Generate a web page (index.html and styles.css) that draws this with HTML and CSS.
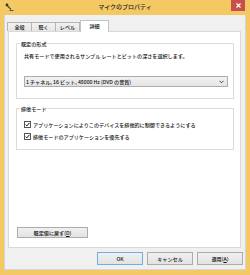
FILE: index.html
```html
<!DOCTYPE html>
<html lang="ja">
<head>
<meta charset="utf-8">
<link rel="stylesheet" href="styles.css">
</head>
<body>
<div class="window">
  <div class="titlebar">
    <div class="tb-left">
      <svg class="app-icon" width="9" height="9" viewBox="0 0 9 9">
        <circle cx="2" cy="2" r="1.4" fill="#333"/>
        <path d="M2.5 2.8 L6 6.3" stroke="#333" stroke-width="1.1" fill="none"/>
        <path d="M4.5 7.5 H8.5" stroke="#555" stroke-width="1" fill="none"/>
      </svg>
    </div>
    <div class="title">マイクのプロパティ</div>
    <div class="tb-right">
      <div class="close">
        <svg width="5" height="5" viewBox="0 0 5 5"><path d="M0.5 0.5 L4.5 4.5 M4.5 0.5 L0.5 4.5" stroke="#fff" stroke-width="1.2"/></svg>
      </div>
    </div>
  </div>
  <div class="client">
    <div class="tabs">
      <div class="tab t1">全般</div>
      <div class="tab t2">聴く</div>
      <div class="tab t3">レベル</div>
      <div class="tab active">詳細</div>
    </div>
    <div class="panel">
      <fieldset class="group g1">
        <legend>既定の形式</legend>
        <p class="desc">共有モードで使用されるサンプル レートとビットの深さを選択します。</p>
        <div class="select">
          <span class="select-text">1 チャネル, 16 ビット, 48000 Hz (DVD の音質)</span>
          <svg class="chev" width="5" height="4" viewBox="0 0 5 4"><path d="M0.5 0.8 L2.5 2.8 L4.5 0.8" stroke="#444" stroke-width="1" fill="none"/></svg>
        </div>
      </fieldset>
      <fieldset class="group g2">
        <legend>排他モード</legend>
        <div class="check">
          <svg class="cb" width="7" height="7" viewBox="0 0 7 7"><rect x="0.5" y="0.5" width="6" height="6" fill="#fff" stroke="#555"/><path d="M1.6 3.6 L2.9 4.9 L5.4 1.9" stroke="#111" stroke-width="1" fill="none"/></svg>
          <span>アプリケーションによりこのデバイスを排他的に制御できるようにする</span>
        </div>
        <div class="check">
          <svg class="cb" width="7" height="7" viewBox="0 0 7 7"><rect x="0.5" y="0.5" width="6" height="6" fill="#fff" stroke="#555"/><path d="M1.6 3.6 L2.9 4.9 L5.4 1.9" stroke="#111" stroke-width="1" fill="none"/></svg>
          <span>排他モードのアプリケーションを優先する</span>
        </div>
      </fieldset>
      <div class="btn restore">既定値に戻す(<u>D</u>)</div>
    </div>
    <div class="buttons">
      <div class="btn ok">OK</div>
      <div class="btn">キャンセル</div>
      <div class="btn">適用(<u>A</u>)</div>
    </div>
  </div>
</div>
</body>
</html>
```

FILE: styles.css
```css
html, body {
  margin: 0;
  padding: 0;
}
body {
  width: 250px;
  height: 275px;
  overflow: hidden;
  font-family: "Noto Sans CJK JP", "Noto Sans", sans-serif;
  font-size: 5.1px;
  line-height: 7px;
  font-weight: 500;
  color: #111;
}
.window {
  width: 250px;
  height: 275px;
  box-sizing: border-box;
  background: #f4c964;
  display: flex;
  flex-direction: column;
}
.titlebar {
  height: 15px;
  flex: none;
  display: grid;
  grid-template-columns: 1fr auto 1fr;
  align-items: start;
}
.tb-left {
  padding: 3px 0 0 5px;
}
.app-icon {
  display: block;
}
.title {
  font-size: 6px;
  line-height: 8px;
  padding-top: 3px;
  color: #222;
}
.tb-right {
  display: flex;
  justify-content: flex-end;
  padding-right: 5px;
}
.close {
  width: 14px;
  height: 11px;
  background: #c94f4d;
  display: flex;
  align-items: center;
  justify-content: center;
}
.close svg {
  display: block;
}
.client {
  flex: 1;
  margin: 0 4px 5px 4px;
  background: #f0f0f0;
  border: 1px solid #d6d6d6;
  border-top: none;
  box-sizing: border-box;
  padding: 5px 4px 4px 3px;
  display: flex;
  flex-direction: column;
}
.tabs {
  height: 11px;
  flex: none;
  display: flex;
  align-items: flex-end;
  position: relative;
  z-index: 2;
}
.tab {
  height: 9px;
  box-sizing: border-box;
  border: 1px solid #b4b4b4;
  border-bottom: none;
  background: linear-gradient(#f2f2f2, #e6e6e6);
  text-align: center;
  line-height: 8px;
  width: 25px;
  margin-left: -1px;
}
.tab.active {
  height: 12px;
  width: 29px;
  margin-left: 0;
  margin-bottom: -1px;
  background: #fff;
  border-color: #c4c4c4;
  line-height: 9px;
}
.panel {
  flex: 1;
  background: #fff;
  border: 1px solid #d9d9d9;
  padding: 8px 6px 9px 7px;
  display: flex;
  flex-direction: column;
  min-height: 0;
}
.group {
  margin: 0;
  border: 1px solid #dcdcdc;
  padding: 0 5px 0 7px;
  min-width: 0;
}
.group legend {
  padding: 0 1px;
  margin-left: -4px;
  line-height: 7px;
}
.g1 {
  padding-top: 5px;
  padding-bottom: 11px;
}
.desc {
  margin: 0;
  white-space: nowrap;
}
.select {
  margin-top: 17px;
  height: 11px;
  box-sizing: border-box;
  border: 1px solid #adadad;
  background: linear-gradient(#f2f2f2, #e4e4e4);
  display: flex;
  align-items: center;
  padding-left: 1px;
}
.select-text {
  flex: 1;
  white-space: nowrap;
  line-height: 9px;
}
.chev {
  display: block;
  margin-right: 3px;
}
.g2 {
  margin-top: 6px;
  padding-top: 9px;
  padding-bottom: 9px;
}
.check {
  display: flex;
  align-items: center;
  gap: 2px;
  white-space: nowrap;
  height: 7px;
}
.check + .check {
  margin-top: 5px;
}
.cb {
  display: block;
  flex: none;
}
.btn {
  height: 11px;
  box-sizing: border-box;
  border: 1px solid #acacac;
  background: linear-gradient(#f0f0f0, #e3e3e3);
  text-align: center;
  line-height: 9px;
  white-space: nowrap;
}
.restore {
  margin-top: auto;
  margin-left: 1px;
  width: 71px;
}
.buttons {
  flex: none;
  display: flex;
  justify-content: flex-end;
  gap: 4px;
  margin-top: 4px;
  margin-right: -2px;
}
.buttons .btn {
  width: 46px;
  height: 13px;
  line-height: 11px;
}
.buttons .btn.ok {
  border-color: #6faee8;
}
```
